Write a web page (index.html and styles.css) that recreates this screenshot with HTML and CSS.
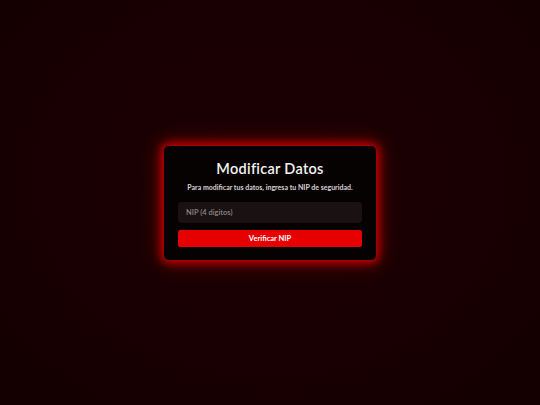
FILE: index.html
```html
<!DOCTYPE html>
<html lang="es">
<head>
<meta charset="utf-8">
<title>Modificar Datos</title>
<link rel="stylesheet" href="styles.css">
</head>
<body>
<main class="screen">
  <section class="card">
    <h1 class="title">Modificar Datos</h1>
    <p class="subtitle">Para modificar tus datos, ingresa tu NIP de seguridad.</p>
    <input class="pin" type="password" placeholder="NIP (4 digitos)">
    <button class="verify" type="button">Verificar NIP</button>
  </section>
</main>
</body>
</html>
```
FILE: styles.css
```css
html, body {
  margin: 0;
  padding: 0;
  height: 100%;
}
body {
  font-family: Lato, "Open Sans", sans-serif;
  background: radial-gradient(ellipse at 50% 45%, #1c0003 0%, #190002 60%, #130000 100%);
  background-color: #180002;
}
.screen {
  height: 405px;
  display: flex;
  align-items: center;
  justify-content: center;
}
.card {
  width: 212px;
  box-sizing: border-box;
  padding: 13px 14px 13px;
  background: #070202;
  border-radius: 5px;
  box-shadow: 0 0 10px 3px rgba(230, 0, 0, 0.85), 0 0 22px 4px rgba(200, 0, 0, 0.35);
  display: flex;
  flex-direction: column;
  align-items: stretch;
  text-align: center;
}
.title {
  margin: 0;
  font-size: 14.5px;
  line-height: 19px;
  font-weight: 600;
  color: #f2f2f2;
  letter-spacing: 0.3px;
}
.subtitle {
  margin: 4px 0 0;
  font-size: 7px;
  line-height: 10px;
  font-weight: 700;
  color: #d8d2d2;
}
.pin {
  margin-top: 10px;
  height: 21px;
  box-sizing: border-box;
  border: none;
  border-radius: 4px;
  background: #1a1212;
  padding: 0 8px;
  font-family: inherit;
  font-size: 7.5px;
  color: #ddd;
  outline: none;
}
.pin::placeholder {
  color: #8c8787;
  font-weight: 600;
}
.verify {
  margin-top: 7px;
  height: 17px;
  border: none;
  border-radius: 2px;
  background: #e60000;
  color: #fff;
  font-family: inherit;
  font-size: 7.5px;
  font-weight: 700;
  padding: 0;
}
```
